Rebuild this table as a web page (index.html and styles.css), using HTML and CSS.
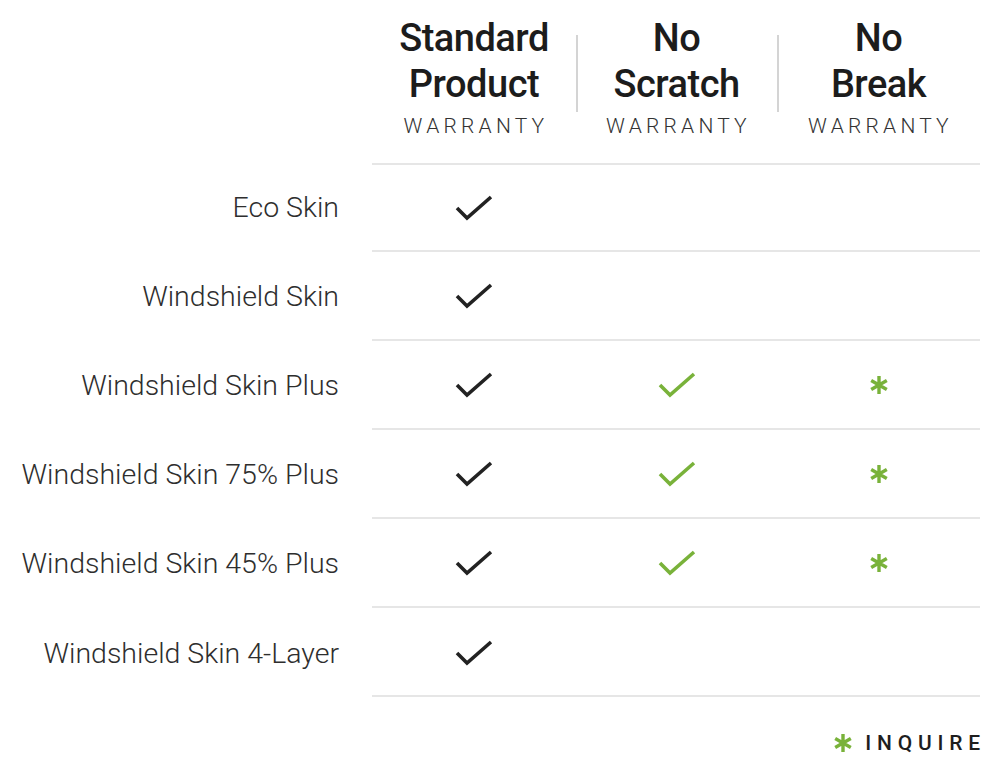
FILE: index.html
```html
<!DOCTYPE html>
<html>
<head>
<meta charset="utf-8">
<link rel="stylesheet" href="styles.css">
</head>
<body>
<div class="page">
  <div class="table">
    <div class="head-row">
      <div class="label-cell"></div>
      <div class="head-cell">
        <div class="title">Standard<br>Product</div>
        <div class="sub">WARRANTY</div>
      </div>
      <div class="head-cell divided">
        <div class="title">No<br>Scratch</div>
        <div class="sub">WARRANTY</div>
      </div>
      <div class="head-cell divided">
        <div class="title">No<br>Break</div>
        <div class="sub">WARRANTY</div>
      </div>
    </div>

    <div class="row first">
      <div class="label-cell">Eco Skin</div>
      <div class="cell"><svg class="check" viewBox="0 0 38 26"><path d="M2 13 L12 23 L36 2"/></svg></div>
      <div class="cell"></div>
      <div class="cell"></div>
    </div>
    <div class="row">
      <div class="label-cell">Windshield Skin</div>
      <div class="cell"><svg class="check" viewBox="0 0 38 26"><path d="M2 13 L12 23 L36 2"/></svg></div>
      <div class="cell"></div>
      <div class="cell"></div>
    </div>
    <div class="row">
      <div class="label-cell">Windshield Skin Plus</div>
      <div class="cell"><svg class="check" viewBox="0 0 38 26"><path d="M2 13 L12 23 L36 2"/></svg></div>
      <div class="cell"><svg class="check green" viewBox="0 0 38 26"><path d="M2 13 L12 23 L36 2"/></svg></div>
      <div class="cell"><svg class="star" viewBox="0 0 20 20"><path d="M10 1 V19 M2.2 5.5 L17.8 14.5 M2.2 14.5 L17.8 5.5"/></svg></div>
    </div>
    <div class="row">
      <div class="label-cell">Windshield Skin 75% Plus</div>
      <div class="cell"><svg class="check" viewBox="0 0 38 26"><path d="M2 13 L12 23 L36 2"/></svg></div>
      <div class="cell"><svg class="check green" viewBox="0 0 38 26"><path d="M2 13 L12 23 L36 2"/></svg></div>
      <div class="cell"><svg class="star" viewBox="0 0 20 20"><path d="M10 1 V19 M2.2 5.5 L17.8 14.5 M2.2 14.5 L17.8 5.5"/></svg></div>
    </div>
    <div class="row">
      <div class="label-cell">Windshield Skin 45% Plus</div>
      <div class="cell"><svg class="check" viewBox="0 0 38 26"><path d="M2 13 L12 23 L36 2"/></svg></div>
      <div class="cell"><svg class="check green" viewBox="0 0 38 26"><path d="M2 13 L12 23 L36 2"/></svg></div>
      <div class="cell"><svg class="star" viewBox="0 0 20 20"><path d="M10 1 V19 M2.2 5.5 L17.8 14.5 M2.2 14.5 L17.8 5.5"/></svg></div>
    </div>
    <div class="row last">
      <div class="label-cell">Windshield Skin 4-Layer</div>
      <div class="cell"><svg class="check" viewBox="0 0 38 26"><path d="M2 13 L12 23 L36 2"/></svg></div>
      <div class="cell"></div>
      <div class="cell"></div>
    </div>
  </div>

  <div class="legend">
    <svg class="star legend-star" viewBox="0 0 20 20"><path d="M10 1 V19 M2.2 5.5 L17.8 14.5 M2.2 14.5 L17.8 5.5"/></svg>
    <span class="legend-text">INQUIRE</span>
  </div>
</div>
</body>
</html>
```
FILE: styles.css
```css
* { box-sizing: border-box; }
html, body { margin: 0; padding: 0; background: #fff; }
body {
  font-family: Roboto, "Liberation Sans", sans-serif;
  color: #222;
  width: 1000px;
  height: 776px;
  overflow: hidden;
}
.page { padding-top: 15px; }
.table { display: flex; flex-direction: column; }

.head-row, .row {
  display: grid;
  grid-template-columns: 372px 204px 201px 203px;
}
.head-row { height: 148px; }
.head-cell {
  display: flex;
  flex-direction: column;
  align-items: center;
  position: relative;
}
.head-cell.divided::before {
  content: "";
  position: absolute;
  left: 0;
  top: 20px;
  height: 77px;
  width: 2px;
  background: #d4d4d4;
}
.title {
  font-size: 38px;
  font-weight: 500;
  line-height: 46px;
  text-align: center;
  color: #1c1c1c;
  letter-spacing: -0.5px;
}
.sub {
  margin-top: 8px;
  font-size: 21px;
  font-weight: 300;
  letter-spacing: 4.2px;
  padding-left: 4px;
  color: #333;
  line-height: 22px;
}

.row {
  height: 89px;
  width: 980px;
  position: relative;
}
.row.first { height: 87px; }
.row::before {
  content: "";
  position: absolute;
  left: 372px;
  right: 0;
  top: 0;
  height: 2px;
  background: #e6e6e6;
}
.row.last { height: 91px; }
.row.last::after {
  content: "";
  position: absolute;
  left: 372px;
  right: 0;
  bottom: 0;
  height: 2px;
  background: #e6e6e6;
}
.row .label-cell {
  display: flex;
  align-items: center;
  justify-content: flex-end;
  padding-right: 33px;
  font-size: 28.5px;
  font-weight: 300;
  color: #2e2e2e;
  white-space: nowrap;
  padding-top: 4px;
}
.row.first .label-cell { padding-top: 2px; }
.cell {
  display: flex;
  align-items: center;
  justify-content: center;
}

.check {
  width: 38px;
  height: 26px;
  fill: none;
  stroke: #222;
  stroke-width: 3.6;
  margin-top: 2px;
}
.check.green { stroke: #79b23a; }
.star {
  width: 20px;
  height: 20px;
  fill: none;
  stroke: #79b23a;
  stroke-width: 3.4;
  margin-top: 2px;
}

.legend {
  display: flex;
  justify-content: flex-end;
  align-items: center;
  gap: 12px;
  padding-right: 14px;
  margin-top: 36px;
}
.legend-star { width: 20px; height: 20px; margin-top: 0; }
.legend-text {
  font-size: 21px;
  font-weight: 500;
  letter-spacing: 5.8px;
  color: #1e1e1e;
  line-height: 20px;
}
```
